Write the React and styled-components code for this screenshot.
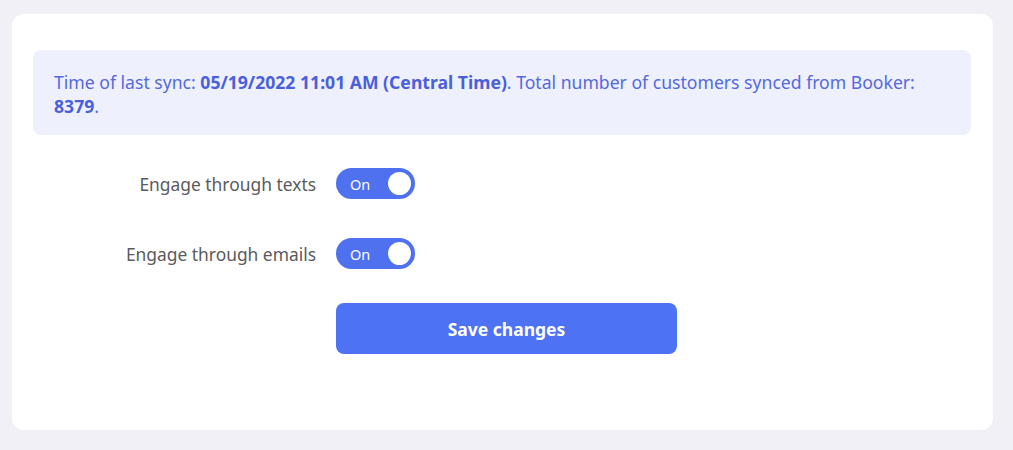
import React, { useState } from 'react'
import styled, { createGlobalStyle } from 'styled-components'

const GlobalStyle = createGlobalStyle`
  html, body {
    margin: 0;
    padding: 0;
    background: #f1f0f7;
    font-family: "Noto Sans", "Open Sans", sans-serif;
  }
`

const Page = styled.div`
  padding: 14px 20px 20px 12px;
`

const Card = styled.div`
  background: #ffffff;
  border-radius: 12px;
  padding: 36px 22px 75px 21px;
  height: 416px;
  box-sizing: border-box;
`

const SyncInfo = styled.div`
  background: #eef0fd;
  border-radius: 8px;
  padding: 20px 21px 17px 21px;
  color: #5468e0;
  font-size: 17.6px;
  line-height: 24px;

  strong {
    font-weight: 700;
    color: #4a5fdc;
  }
`

const Settings = styled.div`
  display: flex;
  flex-direction: column;
  align-items: flex-start;
  margin-top: 33px;
`

const Row = styled.div`
  display: grid;
  grid-template-columns: 283px auto;
  column-gap: 20px;
  align-items: center;
  margin-bottom: 39px;
`

const Label = styled.span`
  text-align: right;
  font-size: 17.4px;
  color: #5a5a60;
`

const Toggle = styled.button`
  position: relative;
  width: 79px;
  height: 31px;
  border: none;
  border-radius: 16px;
  background: ${p => (p.$on ? '#4f70ef' : '#c9ccd8')};
  color: #ffffff;
  font-family: inherit;
  font-size: 14.5px;
  padding: 0 0 0 14px;
  text-align: left;
  cursor: pointer;
`

const Knob = styled.span`
  position: absolute;
  top: 4px;
  right: ${p => (p.$on ? '4px' : '52px')};
  width: 23px;
  height: 23px;
  border-radius: 50%;
  background: #ffffff;
`

const SaveButton = styled.button`
  margin-left: 303px;
  margin-top: -5px;
  width: 341px;
  height: 51px;
  border: none;
  border-radius: 8px;
  background: #4d72f4;
  color: #ffffff;
  font-family: inherit;
  font-size: 17.5px;
  font-weight: 700;
  cursor: pointer;
`

function Switch({ on, onClick }) {
  return (
    <Toggle $on={on} onClick={onClick}>
      {on ? 'On' : ''}
      <Knob $on={on} />
    </Toggle>
  )
}

export default function App() {
  const [texts, setTexts] = useState(true)
  const [emails, setEmails] = useState(true)

  return (
    <Page>
      <GlobalStyle />
      <Card>
        <SyncInfo>
          Time of last sync: <strong>05/19/2022 11:01 AM (Central Time)</strong>. Total number of customers synced from Booker: <strong>8379</strong>.
        </SyncInfo>
        <Settings>
          <Row>
            <Label>Engage through texts</Label>
            <Switch on={texts} onClick={() => setTexts(!texts)} />
          </Row>
          <Row>
            <Label>Engage through emails</Label>
            <Switch on={emails} onClick={() => setEmails(!emails)} />
          </Row>
        </Settings>
        <SaveButton>Save changes</SaveButton>
      </Card>
    </Page>
  )
}
